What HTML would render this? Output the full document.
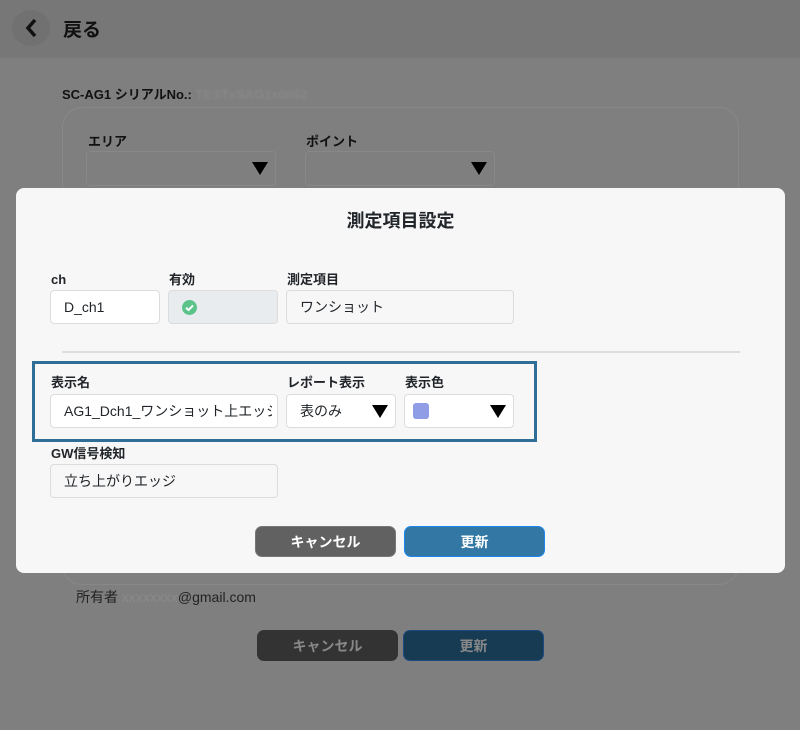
<!DOCTYPE html>
<html><head><meta charset="utf-8"><style>
*{box-sizing:border-box;margin:0;padding:0}
body{width:800px;height:730px;background:#7f7f7f;font-family:"Liberation Sans","Noto Sans CJK JP",sans-serif;position:relative;overflow:hidden;color:#212529}
.abs{position:absolute}
.hdr{left:0;top:0;width:800px;height:58px;background:#777}
.back{left:12px;top:10px;width:38px;height:36px;border-radius:50%;background:#717171}
.lbl{font-size:13px;font-weight:bold;line-height:16px}
.inp{border:1px solid #dcdcdc;border-radius:4px;background:#fff;font-size:14px;padding-left:13px;display:flex;align-items:center;height:34px}
.tri{position:absolute;right:7px;top:10px;width:0;height:0;border-left:8px solid transparent;border-right:8px solid transparent;border-top:13px solid #000}
.btn{border-radius:7px;color:#fff;font-size:14px;font-weight:bold;display:flex;align-items:center;justify-content:center;height:31px;width:141px}
</style></head><body>
<div class="abs hdr"></div>
<div class="abs back"></div>
<svg class="abs" style="left:24px;top:17px" width="14" height="22"><path d="M11 3 L4 11 L11 19" stroke="#111" stroke-width="3.5" fill="none"/></svg>
<div class="abs" style="left:63px;top:15px;font-size:19px;font-weight:bold;color:#111">戻る</div>
<div class="abs" style="left:62px;top:84px;font-size:13px;font-weight:bold;color:#111">SC-AG1 シリアルNo.: <span style="color:#888;filter:blur(1px)">TESTxSAG1x0052</span></div>
<div class="abs" style="left:62px;top:107px;width:677px;height:478px;border:1px solid #888;border-radius:20px"></div>
<div class="abs lbl" style="left:88px;top:134px;color:#111">エリア</div>
<div class="abs lbl" style="left:306px;top:134px;color:#111">ポイント</div>
<div class="abs" style="left:86px;top:151px;width:190px;height:35px;border:1px solid #888;border-radius:4px;background:#7f7f7f"><div class="tri"></div></div>
<div class="abs" style="left:305px;top:151px;width:190px;height:35px;border:1px solid #888;border-radius:4px;background:#7f7f7f"><div class="tri"></div></div>
<div class="abs" style="left:76px;top:587px;font-size:14px;color:#222">所有者 <span style="color:#8a8a8a">xxxxxxxx</span>@gmail.com</div>
<div class="abs btn" style="left:257px;top:630px;background:#333;color:#888;height:31px">キャンセル</div>
<div class="abs btn" style="left:403px;top:630px;background:#173b52;color:#888;border:1px solid #1d4a80">更新</div>

<div class="abs" style="left:16px;top:188px;width:769px;height:385px;background:#f7f7f7;border-radius:8px"></div>
<div class="abs" style="left:16px;top:207px;width:769px;text-align:center;font-size:18px;font-weight:bold">測定項目設定</div>
<div class="abs lbl" style="left:51px;top:272px">ch</div>
<div class="abs lbl" style="left:169px;top:272px">有効</div>
<div class="abs lbl" style="left:287px;top:272px">測定項目</div>
<div class="abs inp" style="left:50px;top:290px;width:110px">D_ch1</div>
<div class="abs inp" style="left:168px;top:290px;width:110px;background:#e9ecef"><svg width="15" height="15"><circle cx="7.5" cy="7.5" r="7.5" fill="#5cc48b"/><path d="M4 7.8 L6.5 10 L11 5.5" stroke="#fff" stroke-width="2" fill="none"/></svg></div>
<div class="abs inp" style="left:286px;top:290px;width:228px;background:#f7f7f7">ワンショット</div>
<div class="abs" style="left:62px;top:351px;width:678px;height:2px;background:#ddd"></div>
<div class="abs" style="left:32px;top:361px;width:505px;height:81px;border:3px solid #2f6f97"></div>
<div class="abs lbl" style="left:51px;top:375px">表示名</div>
<div class="abs lbl" style="left:287px;top:375px">レポート表示</div>
<div class="abs lbl" style="left:405px;top:375px">表示色</div>
<div class="abs inp" style="left:50px;top:394px;width:228px;white-space:nowrap;overflow:hidden"><span style="display:block;width:208px;overflow:hidden">AG1_Dch1_ワンショット上エッジ</span></div>
<div class="abs inp" style="left:286px;top:394px;width:110px">表のみ<div class="tri"></div></div>
<div class="abs inp" style="left:404px;top:394px;width:110px;padding-left:8px"><div style="width:16px;height:16px;border-radius:3px;background:#8e9de6"></div><div class="tri"></div></div>
<div class="abs lbl" style="left:51px;top:446px">GW信号検知</div>
<div class="abs inp" style="left:50px;top:464px;width:228px;background:#f7f7f7">立ち上がりエッジ</div>
<div class="abs btn" style="left:255px;top:526px;background:#616161;border:1px solid #777">キャンセル</div>
<div class="abs btn" style="left:404px;top:526px;background:#3377a4;border:1px solid #1a86ee">更新</div>
</body></html>
